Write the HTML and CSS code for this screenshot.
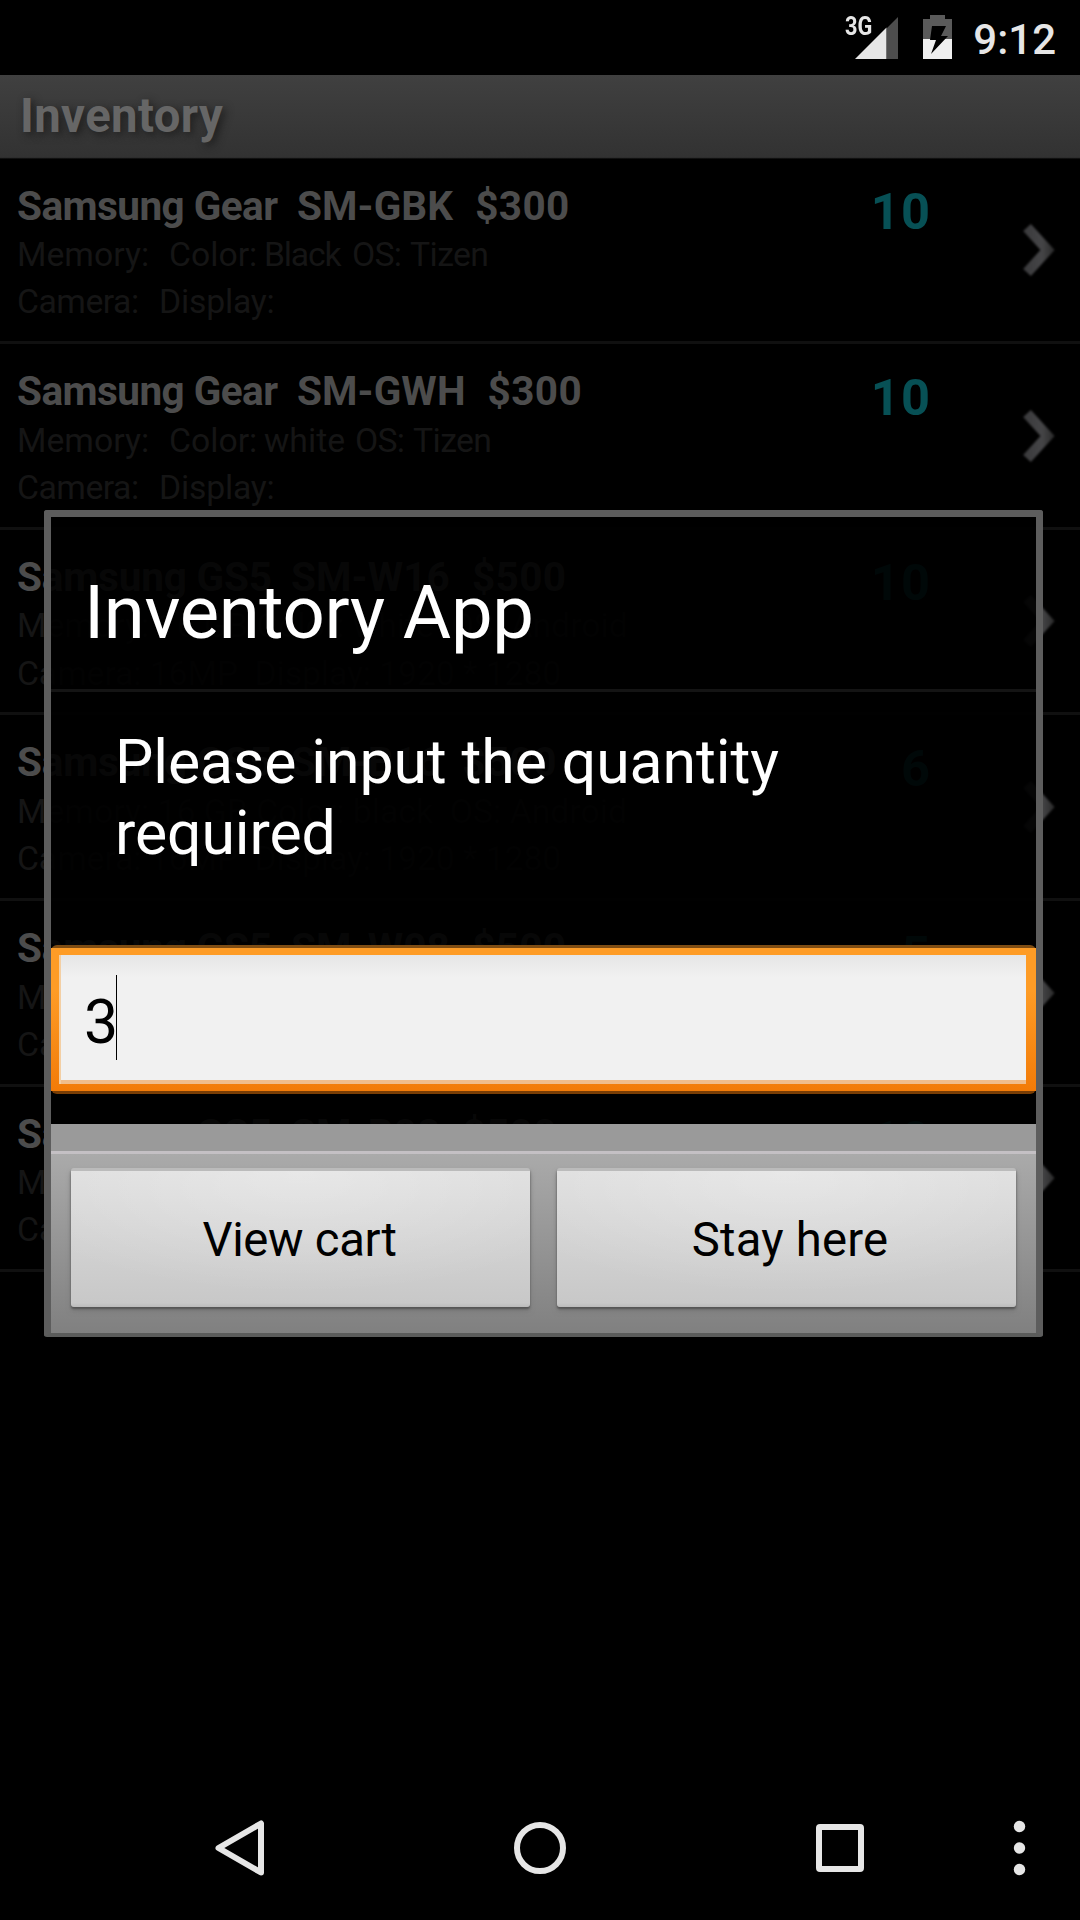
FILE: index.html
```html
<!DOCTYPE html>
<html lang="en">
<head>
<meta charset="utf-8">
<title>Inventory</title>
<link rel="stylesheet" href="styles.css">
</head>
<body>
<div class="screen">
  <header class="status">
    <span class="net">3G</span>
    <svg class="signal" width="44" height="44" viewBox="0 0 44 44"><path d="M43 1V43H32V12z" fill="#4d4d4d"/><path d="M31.500 11.500V43H0z" fill="#e6e6e6"/></svg>
    <svg class="battery" width="29" height="44" viewBox="0 0 29 44"><path d="M7 0h15v4h7v20H0V4h7z" fill="#5a5a5a"/><path d="M0 24h29v20H0z" fill="#efefef"/><path d="M9 11h14l-5 10h7L8 39l5-14H7z" fill="#000"/></svg>
    <span class="clock">9:12</span>
  </header>
  <h1 class="titlebar">Inventory</h1>
  <ul class="list">
    <li class="row">
      <div class="info"><p class="name"><span class="w1">Samsung Gear</span><span class="w2">SM-GBK</span><span class="p">$300</span></p><p class="spec"><span class="m">Memory:</span><span class="c">Color:</span><span class="k tight">Black</span><span class="o">OS:</span><span class="t">Tizen</span></p><p class="spec"><span class="cam">Camera:</span><span class="d">Display:</span></p></div>
      <span class="qty">10</span>
      <svg class="chev" width="46" height="60" viewBox="0 0 46 60"><defs><linearGradient id="tip" x1="8" x2="43" y1="0" y2="0" gradientUnits="userSpaceOnUse"><stop offset="0" stop-color="#38383a"/><stop offset=".6" stop-color="#454547"/><stop offset="1" stop-color="#262626"/></linearGradient></defs><path d="M14 7.500L34.500 30L14 52.500"/></svg>
    </li>
    <li class="row">
      <div class="info"><p class="name"><span class="w1">Samsung Gear</span><span class="w2">SM-GWH</span><span class="p">$300</span></p><p class="spec"><span class="m">Memory:</span><span class="c">Color:</span><span class="k">white</span><span class="o">OS:</span><span class="t">Tizen</span></p><p class="spec"><span class="cam">Camera:</span><span class="d">Display:</span></p></div>
      <span class="qty">10</span>
      <svg class="chev" width="46" height="60" viewBox="0 0 46 60"><path d="M14 7.500L34.500 30L14 52.500"/></svg>
    </li>
    <li class="row">
      <div class="info"><p class="name"><span class="w1 gs">Samsung GS5</span><span class="w2">SM-W16</span><span class="p">$500</span></p><p class="spec"><span>Memory: 16 GB Color: white&nbsp; OS: Android</span></p><p class="spec"><span class="cam5">Camera: 16MP&nbsp; Display: 1920 * 1280</span></p></div>
      <span class="qty">10</span>
      <svg class="chev" width="46" height="60" viewBox="0 0 46 60"><path d="M14 7.500L34.500 30L14 52.500"/></svg>
    </li>
    <li class="row">
      <div class="info"><p class="name"><span class="w1 gs">Samsung GS5</span><span class="w2">SM-B16</span><span class="p">$500</span></p><p class="spec"><span>Memory: 16 GB Color: black&nbsp; OS: Android</span></p><p class="spec"><span class="cam5">Camera: 16MP&nbsp; Display: 1920 * 1280</span></p></div>
      <span class="qty">6</span>
      <svg class="chev" width="46" height="60" viewBox="0 0 46 60"><path d="M14 7.500L34.500 30L14 52.500"/></svg>
    </li>
    <li class="row">
      <div class="info"><p class="name"><span class="w1 gs">Samsung GS5</span><span class="w2">SM-W08</span><span class="p">$500</span></p><p class="spec"><span>Memory:</span></p><p class="spec"><span>Camera:</span></p></div>
      <span class="qty">5</span>
      <svg class="chev" width="46" height="60" viewBox="0 0 46 60"><path d="M14 7.500L34.500 30L14 52.500"/></svg>
    </li>
    <li class="row">
      <div class="info"><p class="name"><span class="w1 gs">Samsung GS5</span><span class="w2">SM-B08</span><span class="p">$500</span></p><p class="spec"><span>Memory:</span></p><p class="spec"><span>Camera:</span></p></div>
      <span class="qty">10</span>
      <svg class="chev" width="46" height="60" viewBox="0 0 46 60"><path d="M14 7.500L34.500 30L14 52.500"/></svg>
    </li>
  </ul>
  <nav class="nav">
    <svg width="864" height="60" viewBox="0 0 864 60" fill="none" stroke="#e6e6e6" stroke-width="6" stroke-linejoin="round"><path d="M18.500 30.500L61 6V55z" transform="translate(0 -.5)"/><circle cx="340" cy="30" r="23"/><rect x="619" y="9" width="42" height="42" rx="1"/><g fill="#e6e6e6" stroke="none"><circle cx="819.500" cy="8.500" r="5.700"/><circle cx="819.500" cy="30" r="5.700"/><circle cx="819.500" cy="51.500" r="5.700"/></g></svg>
  </nav>
  <section class="dialog">
    <h2 class="dtitle">Inventory App</h2>
    <p class="msg">Please input the quantity<br>required</p>
    <div class="field"><div class="inner"><span>3</span><i class="caret"></i></div></div>
    <div class="panel">
      <div class="buttons"><button class="btn view">View cart</button><button class="btn stay">Stay here</button></div>
    </div>
  </section>
</div>
</body>
</html>
```
FILE: styles.css
```css
* { box-sizing: border-box; margin: 0; padding: 0; }
body { background: #000; font-family: Roboto, sans-serif; }
.screen { position: relative; width: 1080px; height: 1920px; background: #000; overflow: hidden; display: flex; flex-direction: column; }

.status { height: 75px; flex: none; display: flex; align-items: flex-start; justify-content: flex-end; padding-right: 24px; color: #e6e6e6; }
.net { width: 10px; margin-top: 12px; font-size: 25px; line-height: 30px; font-weight: 700; transform: scaleX(.87); transform-origin: 0 0; }
.signal { margin: 16px 24px 0 0; }
.battery { margin: 15px 21px 0 0; }
.clock { font-size: 42px; line-height: 50px; font-weight: 500; margin-top: 15px; }

.titlebar { height: 83.500px; flex: none; padding-left: 20px; font-size: 47.250px; line-height: 82px; font-weight: 700; color: #666; letter-spacing: .4px; background: linear-gradient(#404040, #323232 98%, #1c1c1c 99%, #000); text-shadow: 3px 3px 9px #1c1c1c; }

.list { list-style: none; flex: 1; }
.row { height: 185.625px; border-bottom: 3px solid #101010; display: flex; }
.info { width: 780px; padding: 22px 0 0 17px; }
.name { display: flex; font-size: 40.500px; line-height: 50px; font-weight: 700; color: #4c4c4c; white-space: nowrap; }
.w1 { width: 280px; letter-spacing: -.55px; }
.w1.gs { width: 274px; letter-spacing: -.2px; }
.w2 { margin-right: 22px; letter-spacing: .1px; }
.p { letter-spacing: .4px; }
.spec { display: flex; font-size: 33.750px; line-height: 47.300px; color: #151515; white-space: nowrap; margin-top: .5px; }
.spec + .spec { margin-top: 0; }
.m { width: 152px; }
.c { width: 95px; }
.k { width: 91px; }
.k.tight { letter-spacing: -1.200px; width: 91px; margin-right: -3px; }
.o { width: 58px; letter-spacing: -.8px; }
.t { letter-spacing: -.6px; }
.cam { width: 142px; letter-spacing: -.5px; }
.d { letter-spacing: -.2px; }
.cam5 { letter-spacing: -.1px; }
.qty { width: 151.500px; padding-top: 23.500px; font-size: 50.625px; line-height: 60px; font-weight: 700; color: #075055; text-align: right; letter-spacing: 1.400px; }
.chev { margin: 61.500px 0 0 81.500px; filter: blur(.8px); }
.chev path { fill: none; stroke: url(#tip); stroke-width: 10.500; }

.nav { flex: none; height: 144px; padding: 42px 0 0 200px; }

.dialog { position: absolute; left: 44px; top: 510px; width: 999px; height: 827px; border: 7px solid #5d5d5d; border-bottom: 4px solid #5b5c5b; border-radius: 3px; background: rgba(0,0,0,.9); color: #fff; display: flex; flex-direction: column; }
.dtitle { height: 175px; flex: none; padding: 51px 0 0 33px; font-size: 74.250px; line-height: 90px; font-weight: 400; letter-spacing: -.35px; border-bottom: 3px solid #141414; }
.msg { height: 253px; flex: none; padding: 35px 0 0 64px; font-size: 60.750px; line-height: 71px; letter-spacing: -.1px; }
.field { height: 149px; flex: none; padding: 3px 0; border-radius: 6px; background: linear-gradient(#7f4d13, #7f4d13 3px, transparent 3px, transparent 146px, #7a3e05 146px); }
.inner { height: 143px; border: 7px solid #fe9c26; border-width: 7px 10px 7px 8px; padding-left: 25px; display: flex; align-items: flex-start; color: #000; font-size: 60.750px; line-height: 70px;
  background: linear-gradient(90deg, #f3cfa4 2px, transparent 2px) padding-box, linear-gradient(#e6e6e6, #f1f1f1 22px, #f1f1f1 125px, #f0bd8b 125px) padding-box; border-image: linear-gradient(#fe9c26 30%, #f27b08) 7 10 7 8; }
.inner span { margin-top: 33px; }
.caret { width: 1px; height: 85px; background: #000; margin: 20px 0 0 -2px; }
.panel { margin-top: 30px; flex: 1; padding-top: 27px; background: #9a9a9a; }
.buttons { height: 182px; border-top: 3px solid #c4c0c4; padding: 16px 20px 0 20px; display: grid; grid-template-columns: 459px 459px; gap: 27px; background: linear-gradient(#aaa, #808080) padding-box; }
.btn { height: 139px; margin-top: -2px; border: 0; border-top: 3px solid #bbb; border-radius: 3px; font: 400 47.250px/130px Roboto, sans-serif; color: #000; padding-top: 2px; background: radial-gradient(ellipse 70% 90% at 50% 0, rgba(255,255,255,.3), transparent), linear-gradient(#dedede, #c8c8c8 97%, #bbb); box-shadow: 0 2px 2px #555, 0 4px 5px #777; }
.view { letter-spacing: -.3px; padding-right: 2px; }
.stay { letter-spacing: .2px; padding-left: 7px; }
```
